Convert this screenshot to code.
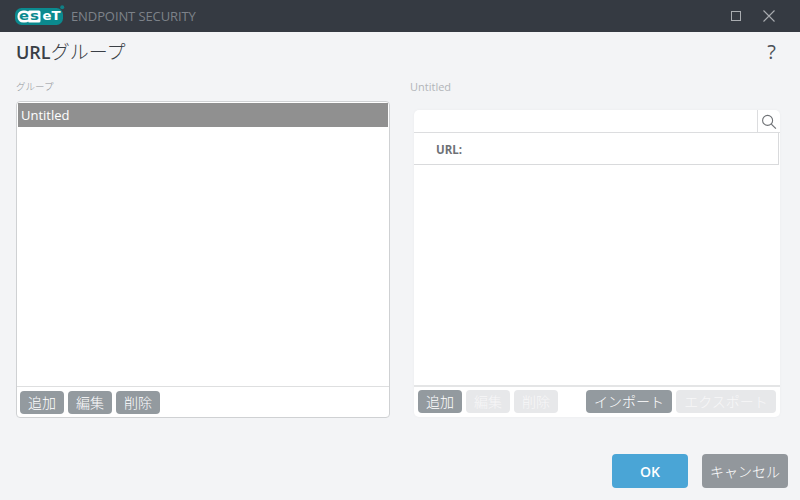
<div class="window">
	<header class="titlebar">
		<div class="brand">
			<svg class="logo" width="50" height="20" viewBox="0 0 50 20" aria-hidden="true">
				<rect x="0" y="3" width="48" height="17" rx="6.5" fill="#0b8a8f" />
				<circle cx="47.2" cy="2.2" r="2" fill="#0f7f86" />
				<rect x="2.5" y="5.5" width="13" height="12" rx="5.5" fill="#fff" />
				<rect x="13" y="5.5" width="12.5" height="12" rx="1.5" fill="#fff" />
				<text class="lt" x="4" y="15.4" textLength="10" lengthAdjust="spacingAndGlyphs" fill="#0b8a8f">e</text>
				<text class="lt" x="15" y="15.4" textLength="9" lengthAdjust="spacingAndGlyphs" fill="#0b8a8f">s</text>
				<text class="lt" x="27.5" y="15.4" textLength="18" lengthAdjust="spacingAndGlyphs" fill="#fff">eT</text>
			</svg>
			<span class="product">ENDPOINT SECURITY</span>
		</div>
		<div class="controls">
			<svg width="12" height="12" viewBox="0 0 12 12" aria-hidden="true">
				<rect x="1.5" y="1.5" width="9" height="9" fill="none" stroke="#a9acb0" stroke-width="1" />
			</svg>
			<svg width="14" height="14" viewBox="0 0 14 14" aria-hidden="true">
				<path d="M1.5 1.5l11 11M12.5 1.5l-11 11" fill="none" stroke="#a9acb0" stroke-width="1.1" />
			</svg>
		</div>
	</header>

	<div class="heading">
		<h1>URL<span class="jp">グループ</span></h1>
		<span class="help">?</span>
	</div>

	<main class="columns">
		<section class="col left">
			<div class="label">グループ</div>
			<div class="panel bordered">
				<div class="list">
					<div class="item selected">Untitled</div>
				</div>
				<div class="toolbar">
					<button class="btn">追加</button>
					<button class="btn">編集</button>
					<button class="btn">削除</button>
				</div>
			</div>
		</section>

		<section class="col right">
			<div class="label">Untitled</div>
			<div class="panel flat">
				<div class="search">
					<div class="search-input"></div>
					<div class="search-icon">
						<svg width="16" height="16" viewBox="0 0 16 16" aria-hidden="true">
							<circle cx="6.6" cy="6.4" r="5" fill="none" stroke="#6f7276" stroke-width="1.1" />
							<path d="M10.3 10.1l4.6 4.6" fill="none" stroke="#6f7276" stroke-width="1.2" />
						</svg>
					</div>
				</div>
				<div class="thead"><span>URL:</span></div>
				<div class="tbody"></div>
				<div class="toolbar">
					<button class="btn">追加</button>
					<button class="btn off">編集</button>
					<button class="btn off">削除</button>
					<span class="spacer"></span>
					<button class="btn wide">インポート</button>
					<button class="btn off wider">エクスポート</button>
				</div>
			</div>
		</section>
	</main>

	<footer class="actions">
		<button class="action ok">OK</button>
		<button class="action cancel">キャンセル</button>
	</footer>
</div>

<style>
	:global(body) {
		margin: 0;
	}
	.window {
		width: 800px;
		height: 500px;
		display: flex;
		flex-direction: column;
		background: #f3f4f6;
		font-family: 'Open Sans', 'Noto Sans CJK JP', sans-serif;
		overflow: hidden;
	}
	.titlebar {
		height: 32px;
		flex: none;
		background: #353a42;
		display: flex;
		align-items: center;
		justify-content: space-between;
		padding: 0 24px 0 15px;
	}
	.brand {
		display: flex;
		align-items: center;
		gap: 6px;
	}
	.logo {
		margin-top: -3px;
	}
	.lt {
		font-family: 'DejaVu Sans', sans-serif;
		font-size: 11.5px;
		font-weight: 700;
	}
	.product {
		font-size: 13px;
		color: #7d8289;
		letter-spacing: -0.1px;
	}
	.controls {
		display: flex;
		align-items: center;
		gap: 20px;
	}
	.heading {
		height: 40px;
		flex: none;
		display: flex;
		align-items: center;
		justify-content: space-between;
		padding: 0 24px 0 16px;
		color: #3a3f46;
	}
	h1 {
		margin: 0;
		font-size: 18px;
		font-weight: 600;
		line-height: 24px;
	}
	.jp {
		font-size: 19px;
		font-weight: 300;
	}
	.help {
		font-size: 20px;
		font-weight: 400;
		line-height: 24px;
		color: #4b5057;
	}
	.columns {
		display: flex;
		padding-left: 16px;
		height: 346px;
		flex: none;
	}
	.col {
		display: flex;
		flex-direction: column;
	}
	.left {
		width: 374px;
	}
	.right {
		width: 370px;
		margin-left: 20px;
	}
	.label {
		height: 29px;
		font-size: 11px;
		line-height: 30px;
		color: #b2b5b9;
	}
	.left .label {
		font-size: 9.5px;
		font-weight: 300;
		color: #8f9297;
	}
	.panel {
		display: flex;
		flex-direction: column;
		background: #fff;
		box-sizing: border-box;
	}
	.bordered {
		height: 317px;
		border: 1px solid #cfd1d3;
		border-radius: 4px;
	}
	.list {
		flex: 1;
		padding: 1px;
	}
	.item {
		height: 24px;
		line-height: 24px;
		font-size: 13px;
		padding-left: 3px;
	}
	.selected {
		background: #909090;
		color: #fff;
	}
	.toolbar {
		display: flex;
		gap: 4px;
		height: 31px;
		box-sizing: border-box;
		padding: 4px 3px 0;
		border-top: 1px solid #dedfe0;
	}
	.btn {
		flex: none;
		width: 44px;
		height: 23px;
		padding: 0;
		border: none;
		border-radius: 4px;
		background: #939a9f;
		color: #fff;
		font: 14px/23px 'Noto Sans CJK JP', sans-serif;
		font-weight: 300;
		white-space: nowrap;
	}
	.off {
		background: #e7e8ea;
		color: #f7f7f8;
	}
	.wide {
		width: 86px;
	}
	.wider {
		width: 100px;
	}
	.spacer {
		flex: 1;
	}
	.flat {
		margin-left: 4px;
		width: 366px;
		height: 307px;
		margin-top: 9px;
		border-radius: 5px;
		box-shadow: 0 0 3px rgba(0, 0, 0, 0.04);
	}
	.search {
		height: 23px;
		flex: none;
		box-sizing: border-box;
		display: flex;
		border-bottom: 1px solid #dcdddf;
	}
	.search-input {
		flex: 1;
		border-right: 1px solid #dcdddf;
	}
	.search-icon {
		width: 22px;
		display: flex;
		align-items: center;
		justify-content: center;
		padding-top: 1px;
	}
	.thead {
		height: 32px;
		flex: none;
		box-sizing: border-box;
		margin-right: 1px;
		border-bottom: 1px solid #d9dadc;
		border-right: 1px solid #d9dadc;
		display: flex;
		align-items: center;
		padding: 1px 0 0 22px;
		font-size: 11.5px;
		font-weight: 700;
		color: #6e7176;
	}
	.tbody {
		flex: 1;
	}
	.flat .toolbar {
		height: 32px;
		padding: 3px 4px 0;
		border-top: 2px solid #e4e5e6;
	}
	.actions {
		flex: 1;
		display: flex;
		justify-content: flex-end;
		gap: 14px;
		padding: 36px 12px 0 0;
	}
	.action {
		height: 34px;
		padding: 0;
		border: none;
		border-radius: 4px;
		color: #fff;
	}
	.ok {
		width: 76px;
		background: #4aa5d6;
		font: 600 14px 'Open Sans', sans-serif;
	}
	.cancel {
		width: 86px;
		background: #92979c;
		font: 300 14px 'Noto Sans CJK JP', sans-serif;
	}
</style>
